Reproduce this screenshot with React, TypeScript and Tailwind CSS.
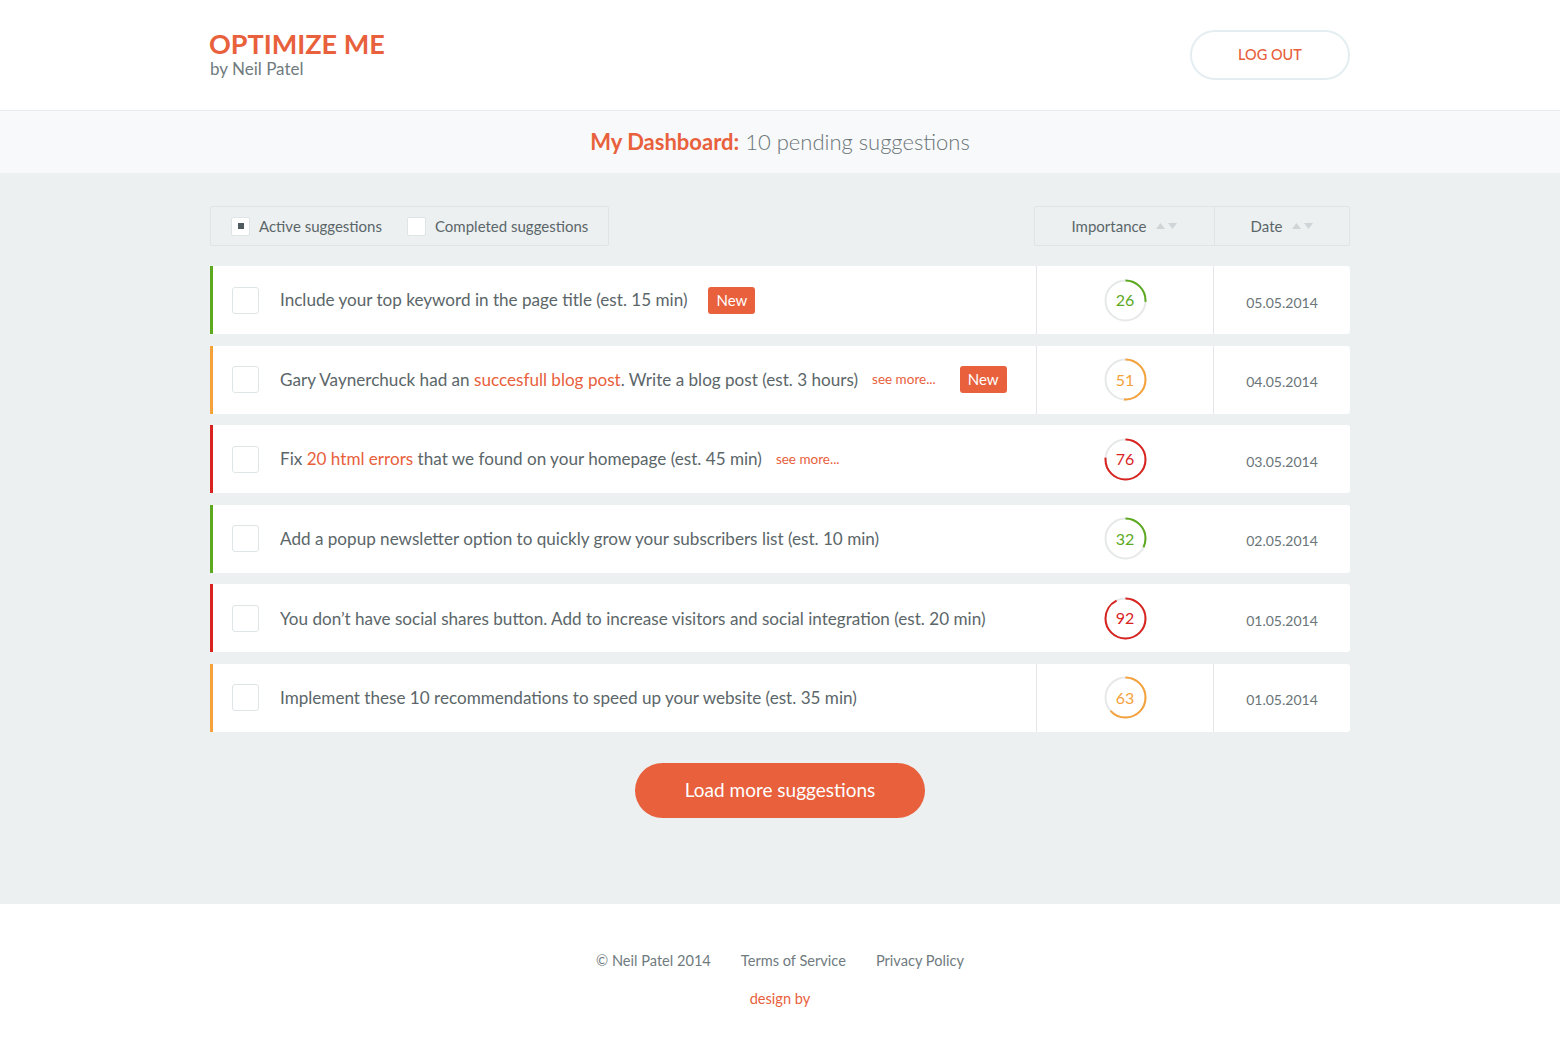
import React from 'react';

type Suggestion = {
  id: number;
  level: 'low' | 'mid' | 'high';
  score: number;
  date: string;
  isNew?: boolean;
  seeMore?: boolean;
  dividers: boolean;
  text: React.ReactNode;
};

const levelColor = {
  low: '#5ca91f',
  mid: '#f5a23b',
  high: '#d8231f',
};

const Accent = ({ children }: { children: React.ReactNode }) => (
  <span className="text-[#e8603c]">{children}</span>
);

const suggestions: Suggestion[] = [
  {
    id: 1,
    level: 'low',
    score: 26,
    date: '05.05.2014',
    isNew: true,
    dividers: true,
    text: <>Include your top keyword in the page title (est. 15 min)</>,
  },
  {
    id: 2,
    level: 'mid',
    score: 51,
    date: '04.05.2014',
    isNew: true,
    seeMore: true,
    dividers: true,
    text: (
      <>
        Gary Vaynerchuck had an <Accent>succesfull blog post</Accent>. Write a blog post (est. 3 hours)
      </>
    ),
  },
  {
    id: 3,
    level: 'high',
    score: 76,
    date: '03.05.2014',
    seeMore: true,
    dividers: false,
    text: (
      <>
        Fix <Accent>20 html errors</Accent> that we found on your homepage (est. 45 min)
      </>
    ),
  },
  {
    id: 4,
    level: 'low',
    score: 32,
    date: '02.05.2014',
    dividers: false,
    text: <>Add a popup newsletter option to quickly grow your subscribers list (est. 10 min)</>,
  },
  {
    id: 5,
    level: 'high',
    score: 92,
    date: '01.05.2014',
    dividers: false,
    text: <>You don’t have social shares button. Add to increase visitors and social integration (est. 20 min)</>,
  },
  {
    id: 6,
    level: 'mid',
    score: 63,
    date: '01.05.2014',
    dividers: true,
    text: <>Implement these 10 recommendations to speed up your website (est. 35 min)</>,
  },
];

// small ring showing the importance score
const ScoreRing = ({ score, color }: { score: number; color: string }) => {
  const r = 20;
  const c = 2 * Math.PI * r;
  return (
    <div className="relative w-[43px] h-[43px]">
      <svg width="43" height="43" viewBox="0 0 43 43" className="absolute inset-0">
        <circle cx="21.5" cy="21.5" r={r} fill="none" stroke="#e6e8e9" strokeWidth="2" />
        <circle
          cx="21.5"
          cy="21.5"
          r={r}
          fill="none"
          stroke={color}
          strokeWidth="2"
          strokeDasharray={`${(score / 100) * c} ${c}`}
          transform="rotate(-90 21.5 21.5)"
        />
      </svg>
      <div className="absolute inset-0 flex items-center justify-center text-[16px]" style={{ color }}>
        {score}
      </div>
    </div>
  );
};

const SortArrows = () => (
  <span className="inline-flex items-center gap-[3px] ml-[10px]">
    <svg width="9" height="6" viewBox="0 0 9 6">
      <path d="M4.5 0 L9 6 L0 6 Z" fill="#cfd5d7" />
    </svg>
    <svg width="9" height="6" viewBox="0 0 9 6">
      <path d="M0 0 L9 0 L4.5 6 Z" fill="#cfd5d7" />
    </svg>
  </span>
);

const Row = ({ s }: { s: Suggestion }) => {
  const color = levelColor[s.level];
  return (
    <div
      className="flex h-[68px] bg-white rounded-r-[3px] border-l-[3px]"
      style={{ borderLeftColor: color }}
    >
      <div className="flex-1 flex items-center pl-[19px]">
        <span className="w-[27px] h-[27px] rounded-[3px] border border-[#dfe4e6] bg-white shrink-0" />
        <span className="ml-[21px] text-[17.1px] text-[#5b6669] whitespace-nowrap">{s.text}</span>
        {s.seeMore && <span className="ml-[14px] text-[13.5px] text-[#e8603c]">see more...</span>}
        {s.isNew && (
          <span className={`${s.seeMore ? 'ml-[24px]' : 'ml-[21px]'} bg-[#e8603c] text-white text-[15px] leading-none px-[8px] py-[6px] rounded-[3px]`}>
            New
          </span>
        )}
      </div>
      <div
        className={`w-[177px] flex items-center justify-center border-l ${s.dividers ? 'border-[#e3e7e8]' : 'border-transparent'}`}
      >
        <ScoreRing score={s.score} color={color} />
      </div>
      <div
        className={`w-[137px] flex items-center justify-center pt-[4px] border-l text-[14px] text-[#6a7578] ${s.dividers ? 'border-[#e3e7e8]' : 'border-transparent'}`}
      >
        {s.date}
      </div>
    </div>
  );
};

export default function App() {
  return (
    <div className="min-h-[1058px] bg-white font-['Lato','Open_Sans',sans-serif] flex flex-col">
      <header className="h-[111px] border-b border-[#e6ecee]">
        <div className="w-[1140px] mx-auto flex items-center justify-between pt-[30px]">
          <div className="leading-none -mt-[3px]">
            <div className="text-[#e8603c] text-[27px] font-bold -ml-[1px]">OPTIMIZE ME</div>
            <div className="text-[#6f7b7e] text-[17px] mt-[3px]">by Neil Patel</div>
          </div>
          <button className="w-[160px] h-[50px] rounded-full border-2 border-[#e4eef1] text-[#e8603c] text-[14.5px] font-medium">
            LOG OUT
          </button>
        </div>
      </header>

      <div className="h-[62px] bg-[#f8f9fa] flex items-center justify-center text-[22px] leading-none">
        <span className="text-[#e8603c] font-bold">My Dashboard:</span>
        <span className="ml-[6px] text-[#6a7578] font-light">10 pending suggestions</span>
      </div>

      <main className="bg-[#ecf0f1] pt-[33px] pb-[86px]">
        <div className="w-[1140px] mx-auto">
          <div className="flex justify-between h-[40px]">
            <div className="flex items-center border border-[#dfe4e6] rounded-[2px] pl-[20px] pr-[20px] text-[15px] text-[#5b6669]">
              <span className="w-[19px] h-[19px] bg-white border border-[#dfe4e6] rounded-[2px] flex items-center justify-center">
                <span className="w-[6px] h-[6px] bg-[#4f5b5e]" />
              </span>
              <span className="ml-[9px]">Active suggestions</span>
              <span className="ml-[25px] w-[19px] h-[19px] bg-white border border-[#dfe4e6] rounded-[2px]" />
              <span className="ml-[9px]">Completed suggestions</span>
            </div>
            <div className="flex border border-[#dfe4e6] rounded-[2px] text-[15px] text-[#5b6669]">
              <div className="w-[179px] flex items-center justify-center">
                Importance
                <SortArrows />
              </div>
              <div className="w-[135px] flex items-center justify-center border-l border-[#dfe4e6]">
                Date
                <SortArrows />
              </div>
            </div>
          </div>

          <div className="mt-[20px] flex flex-col gap-[11.6px]">
            {suggestions.map((s) => (
              <Row key={s.id} s={s} />
            ))}
          </div>

          <div className="flex justify-center mt-[31px]">
            <button className="w-[290px] h-[55px] rounded-full bg-[#e8603c] text-white text-[19px]">
              Load more suggestions
            </button>
          </div>
        </div>
      </main>

      <footer className="flex-1 pt-[46px] text-[14.6px]">
        <div className="flex justify-center gap-[30px] text-[#6f7b7e]">
          <span>© Neil Patel 2014</span>
          <span>Terms of Service</span>
          <span>Privacy Policy</span>
        </div>
        <div className="text-center text-[#e8603c] mt-[16px]">design by</div>
      </footer>
    </div>
  );
}
